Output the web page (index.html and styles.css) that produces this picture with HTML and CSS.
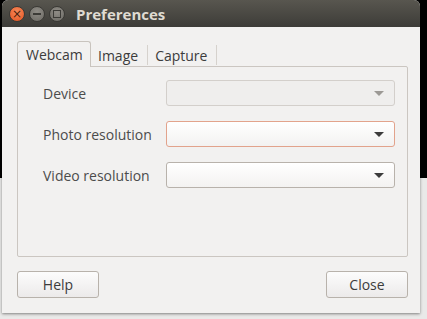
FILE: index.html
```html
<!DOCTYPE html>
<html lang="en">
<head>
  <meta charset="UTF-8" />
  <title>Preferences</title>
  <link rel="stylesheet" href="styles.css">
</head>
<body>
  <div class="desktop">
    <div class="window">
      <div class="titlebar">
        <span class="wbtn close">×</span>
        <span class="wbtn min"><i></i></span>
        <span class="wbtn max"><i></i></span>
        <span class="title">Preferences</span>
      </div>

      <div class="content">
        <div class="tabs">
          <div class="tab active">Webcam</div>
          <div class="tab">Image</div>
          <div class="tab">Capture</div>
        </div>

        <div class="page">
          <div class="row">
            <span class="label">Device</span>
            <div class="combo disabled"><span class="arrow"></span></div>
          </div>
          <div class="row">
            <span class="label">Photo resolution</span>
            <div class="combo focused"><span class="arrow"></span></div>
          </div>
          <div class="row">
            <span class="label">Video resolution</span>
            <div class="combo"><span class="arrow"></span></div>
          </div>
        </div>

        <div class="actions">
          <button class="btn">Help</button>
          <button class="btn">Close</button>
        </div>
      </div>
    </div>
  </div>
</body>
</html>
```

FILE: styles.css
```css
html, body {
  margin: 0;
  padding: 0;
}
body {
  width: 427px;
  height: 319px;
  overflow: hidden;
  font-family: "Open Sans", "Noto Sans", sans-serif;
  font-size: 14px;
}
.desktop {
  height: 319px;
  padding-left: 2px;
  background: linear-gradient(#000 0, #000 178px, #e9e9e8 178px, #e9e9e8 100%);
}
.window {
  width: 418px;
  height: 313px;
  display: flex;
  flex-direction: column;
  background: #f2f1f0;
  border-radius: 6px 6px 0 0;
  box-shadow: 0 1px 3px rgba(0,0,0,0.45);
}
.titlebar {
  height: 27px;
  display: flex;
  align-items: center;
  padding-left: 7px;
  background: linear-gradient(#58564f, #3d3c38);
  border-radius: 6px 6px 0 0;
}
.wbtn {
  width: 16px;
  height: 16px;
  border-radius: 50%;
  margin-right: 4px;
  display: flex;
  align-items: center;
  justify-content: center;
  box-sizing: border-box;
  border: 1px solid #3a3935;
}
.wbtn.close {
  background: radial-gradient(circle at 50% 35%, #f68a5c, #e5531f);
  color: #4a1e0c;
  font-size: 12px;
  line-height: 1;
  font-family: "DejaVu Sans", sans-serif;
}
.wbtn.min, .wbtn.max {
  background: radial-gradient(circle at 50% 35%, #8f8c86, #6c6a64);
}
.wbtn.min i {
  width: 8px;
  height: 2px;
  background: #3c3b37;
}
.wbtn.max i {
  width: 6px;
  height: 6px;
  border: 1px solid #3c3b37;
}
.title {
  margin-left: 7px;
  color: #dfdbd2;
  font-weight: bold;
  font-size: 15px;
}
.content {
  flex: 1;
  display: flex;
  flex-direction: column;
  padding: 14px 12px 14px 15px;
}
.tabs {
  height: 26px;
  display: flex;
  align-items: flex-end;
  position: relative;
  z-index: 1;
  margin-bottom: -1px;
}
.tab {
  height: 20px;
  padding: 0 9px 0 7px;
  color: #3c3c3c;
  display: flex;
  align-items: center;
  border-right: 1px solid #d6d2cd;
  margin-bottom: 2px;
}
.tab.active {
  height: 26px;
  margin-bottom: 0;
  padding: 0 8px;
  box-sizing: border-box;
  border: 1px solid #c9c4be;
  border-bottom: none;
  border-radius: 3px 3px 0 0;
  background: #f2f1f0;
  width: 74px;
}
.page {
  height: 191px;
  box-sizing: border-box;
  border: 1px solid #cbc6c1;
  border-radius: 0 2px 2px 2px;
  padding: 13px 12px 0 25px;
  display: flex;
  flex-direction: column;
  gap: 15px;
}
.row {
  display: grid;
  grid-template-columns: 123px 1fr;
  align-items: center;
}
.label {
  color: #4c4c4c;
}
.combo {
  height: 26px;
  box-sizing: border-box;
  border: 1px solid #b8b2ab;
  border-radius: 3px;
  background: linear-gradient(#ffffff, #f3f2f1);
  display: flex;
  align-items: center;
  justify-content: flex-end;
  padding-right: 10px;
}
.combo.disabled {
  border-color: #d3cfcb;
  background: #efeeed;
}
.combo.focused {
  border-color: #e2a38c;
}
.arrow {
  width: 0;
  height: 0;
  border-left: 5px solid transparent;
  border-right: 5px solid transparent;
  border-top: 5px solid #3c3c3c;
}
.combo.disabled .arrow {
  border-top-color: #9c9995;
}
.actions {
  margin-top: 14px;
  display: flex;
  justify-content: space-between;
}
.btn {
  width: 82px;
  height: 27px;
  font-family: inherit;
  font-size: 14px;
  color: #3c3c3c;
  border: 1px solid #b8b2ab;
  border-radius: 3px;
  background: linear-gradient(#fcfcfc, #eceaea);
  padding: 0 0 1px;
}
```
